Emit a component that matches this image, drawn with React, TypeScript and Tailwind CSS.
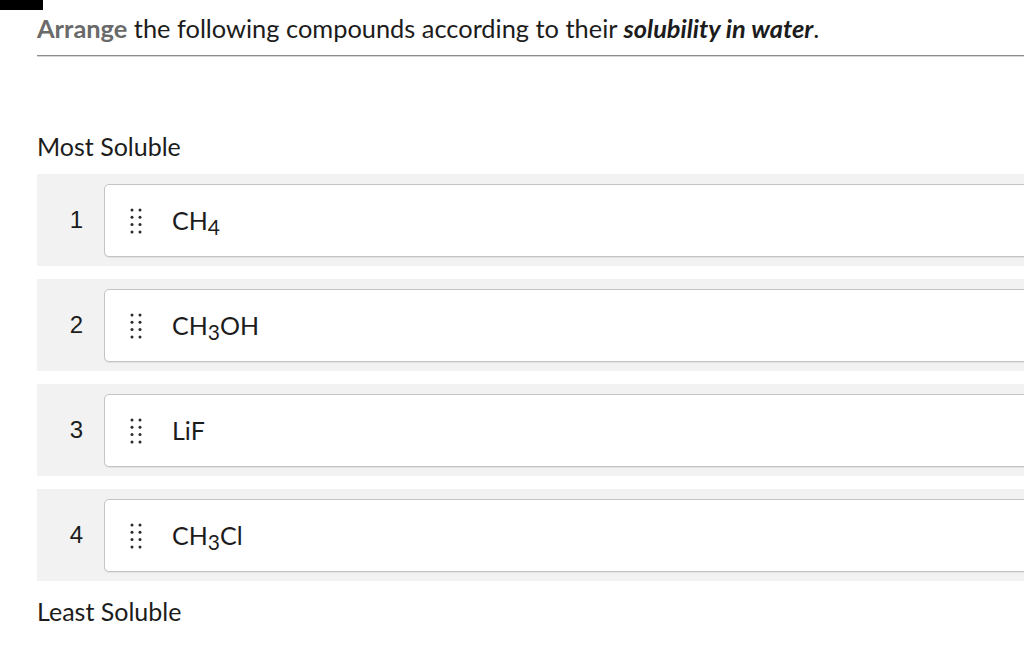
const items = [
  { n: 1, label: <>CH<sub className="relative top-[5px] text-[21px] align-baseline">4</sub></> },
  { n: 2, label: <>CH<sub className="relative top-[5px] text-[21px] align-baseline">3</sub>OH</> },
  { n: 3, label: <>LiF</> },
  { n: 4, label: <>CH<sub className="relative top-[5px] text-[21px] align-baseline">3</sub>Cl</> },
];

function DragHandle() {
  return (
    <svg width="13" height="26" viewBox="0 0 13 26" className="shrink-0">
      {[2, 9.3, 16.6, 24].map((y) => (
        <g key={y} fill="#2b2b2b">
          <circle cx="2" cy={y} r="1.5" />
          <circle cx="10" cy={y} r="1.5" />
        </g>
      ))}
    </svg>
  );
}

export default function App() {
  return (
    <div className="relative w-[1024px] h-[658px] overflow-hidden bg-white text-[#1c1c1c] font-['Lato',sans-serif]">
      <div className="absolute left-0 top-0 w-[43px] h-[10px] bg-black" />

      <div className="ml-[37px] w-[1040px]">
        <h1 className="pt-[12px] h-[44px] text-[25.4px] leading-[32px] font-normal whitespace-nowrap">
          <span className="font-bold text-[#6a6a6a]">Arrange</span> the following compounds according to their{" "}
          <span className="font-bold italic">solubility in water</span>.
        </h1>
        <div className="mt-[11px] h-[2px] bg-[#8c8c8c] border-b border-[#d6d6d6]" />

        <p className="mt-[73px] text-[25px] leading-[32px]">Most Soluble</p>

        <div className="mt-[12px] flex flex-col gap-[13px]">
          {items.map((it) => (
            <div key={it.n} className="flex items-center h-[92px] bg-[#f2f2f2]">
              <div className="w-[67px] shrink-0 pr-[21px] text-right font-['Liberation_Sans',Arial,sans-serif] text-[24px] text-[#1c1c1c]">
                {it.n}
              </div>
              <div className="flex items-center h-[73px] flex-1 bg-white border border-[#c4c4c4] rounded-[5px] shadow-[0_1px_0_#e2e2e2]">
                <div className="ml-[25px] mt-[2px]">
                  <DragHandle />
                </div>
                <span className="ml-[29px] text-[25px] leading-none">{it.label}</span>
              </div>
            </div>
          ))}
        </div>

        <p className="mt-[14px] text-[25px] leading-[32px]">Least Soluble</p>
      </div>
    </div>
  );
}
